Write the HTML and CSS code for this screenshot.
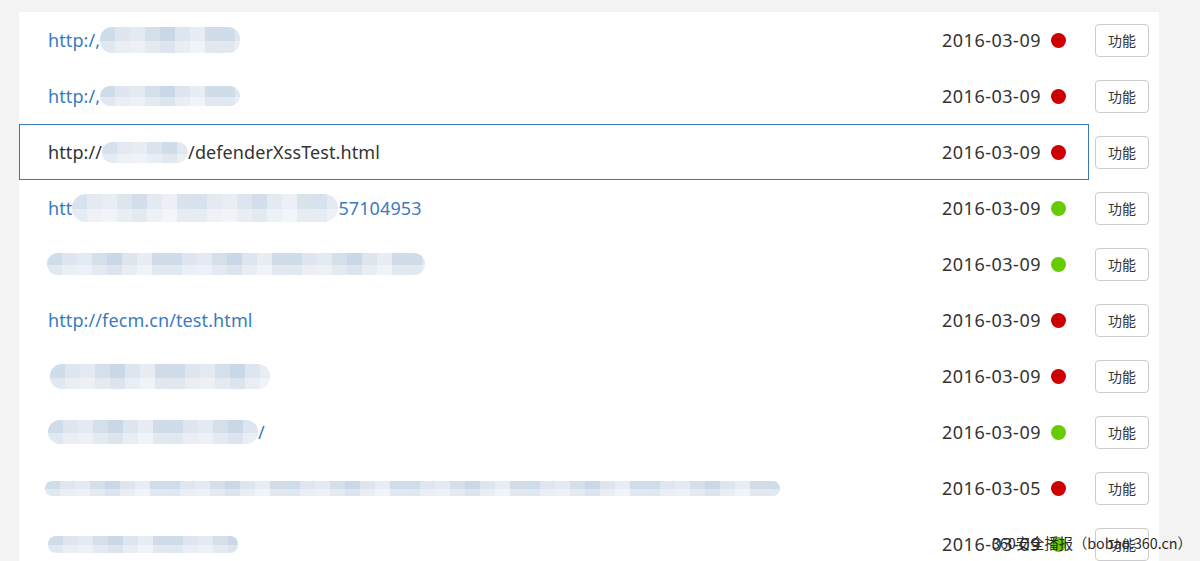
FILE: index.html
```html
<!DOCTYPE html>
<html lang="zh-CN">
<head>
<meta charset="utf-8">
<title>列表</title>
<link rel="stylesheet" href="styles.css">
</head>
<body>
<div class="panel">
  <div class="row">
    <div class="item"><span class="url"><span class="t">http:/,</span><span class="blur b1"></span></span><span class="date">2016-03-09</span><span class="dot red"></span></div>
    <button class="btn">功能</button>
  </div>
  <div class="row">
    <div class="item"><span class="url"><span class="t">http:/,</span><span class="blur b2"></span></span><span class="date">2016-03-09</span><span class="dot red"></span></div>
    <button class="btn">功能</button>
  </div>
  <div class="row">
    <div class="item active"><span class="url"><span class="t">http://</span><span class="blur b3"></span><span class="t">/defenderXssTest.html</span></span><span class="date">2016-03-09</span><span class="dot red"></span></div>
    <button class="btn">功能</button>
  </div>
  <div class="row">
    <div class="item"><span class="url"><span class="t">htt</span><span class="blur b4"></span><span class="t">57104953</span></span><span class="date">2016-03-09</span><span class="dot green"></span></div>
    <button class="btn">功能</button>
  </div>
  <div class="row">
    <div class="item"><span class="url"><span class="blur b5"></span></span><span class="date">2016-03-09</span><span class="dot green"></span></div>
    <button class="btn">功能</button>
  </div>
  <div class="row">
    <div class="item"><span class="url"><span class="t">http://fecm.cn/test.html</span></span><span class="date">2016-03-09</span><span class="dot red"></span></div>
    <button class="btn">功能</button>
  </div>
  <div class="row">
    <div class="item"><span class="url"><span class="blur b7"></span></span><span class="date">2016-03-09</span><span class="dot red"></span></div>
    <button class="btn">功能</button>
  </div>
  <div class="row">
    <div class="item"><span class="url"><span class="blur b8"></span><span class="t">/</span></span><span class="date">2016-03-09</span><span class="dot green"></span></div>
    <button class="btn">功能</button>
  </div>
  <div class="row">
    <div class="item"><span class="url"><span class="blur b9"></span></span><span class="date">2016-03-05</span><span class="dot red"></span></div>
    <button class="btn">功能</button>
  </div>
  <div class="row">
    <div class="item"><span class="url"><span class="blur b10"></span></span><span class="date">2016-03-09</span><span class="dot green"></span></div>
    <button class="btn">功能</button>
  </div>
</div>
<div class="watermark">360安全播报（bobao.360.cn）</div>
</body>
</html>
```
FILE: styles.css
```css
html, body {
  margin: 0;
  padding: 0;
  height: 561px;
  overflow: hidden;
}
body {
  background: #f3f3f3;
  font-family: "Noto Sans", "Noto Sans CJK SC", sans-serif;
  position: relative;
}
.panel {
  margin: 12px 0 0 19px;
  width: 1140px;
  background: #fff;
  height: 560px;
}
.row {
  display: flex;
  align-items: center;
  height: 56px;
}
.item {
  box-sizing: border-box;
  width: 1070px;
  height: 56px;
  display: flex;
  align-items: center;
  padding: 0 22px 0 28px;
  border: 1px solid transparent;
}
.item.active {
  border-color: #3a78b5;
}
.url {
  flex: 1;
  display: flex;
  align-items: center;
  font-size: 18px;
  color: #3a7bbf;
  white-space: nowrap;
  letter-spacing: 0.1px;
}
.item.active .url {
  color: #333;
}
.blur {
  display: inline-block;
  border-radius: 12px;
  background:
    linear-gradient(180deg, rgba(255,255,255,0) 0 55%, rgba(255,255,255,0.35) 55% 100%),
    repeating-linear-gradient(90deg,
      #cfdcea 0 15px, #dfe6ef 15px 30px, #e4eaf2 30px 45px, #d5dfea 45px 60px,
      #c9d7e6 60px 75px, #dde5ee 75px 90px, #e8edf4 90px 105px, #d2dce8 105px 120px);
}
.b1 { width: 140px; height: 26px; }
.b2 { width: 140px; height: 20px; }
.b3 { width: 86px; height: 21px; border-radius: 10px; opacity: 0.85; }
.b4 { width: 266px; height: 28px; border-radius: 14px; opacity: 0.8; }
.b5 { width: 378px; height: 22px; margin-left: -1px; }
.b7 { width: 220px; height: 25px; margin-left: 2px; }
.b8 { width: 210px; height: 24px; }
.b9 { width: 735px; height: 15px; margin-left: -3px; border-radius: 7px; }
.b10 { width: 190px; height: 17px; border-radius: 8px; }
.date {
  font-size: 18px;
  letter-spacing: 0.5px;
  color: #333;
  margin-right: 10px;
}
.dot {
  width: 15px;
  height: 15px;
  border-radius: 50%;
}
.dot.red { background: #cc0000; }
.dot.green { background: #66cc00; }
.btn {
  margin-left: 6px;
  width: 54px;
  height: 33px;
  box-sizing: border-box;
  border: 1px solid #ccc;
  border-radius: 4px;
  background: #fff;
  color: #333;
  font-family: "Noto Sans CJK SC", sans-serif;
  font-size: 14px;
  padding: 0;
}
.watermark {
  position: absolute;
  left: 992px;
  top: 533px;
  font-size: 14.3px;
  line-height: 20px;
  color: #2a2a2a;
  font-family: "Noto Sans CJK SC", sans-serif;
  white-space: nowrap;
}
```
